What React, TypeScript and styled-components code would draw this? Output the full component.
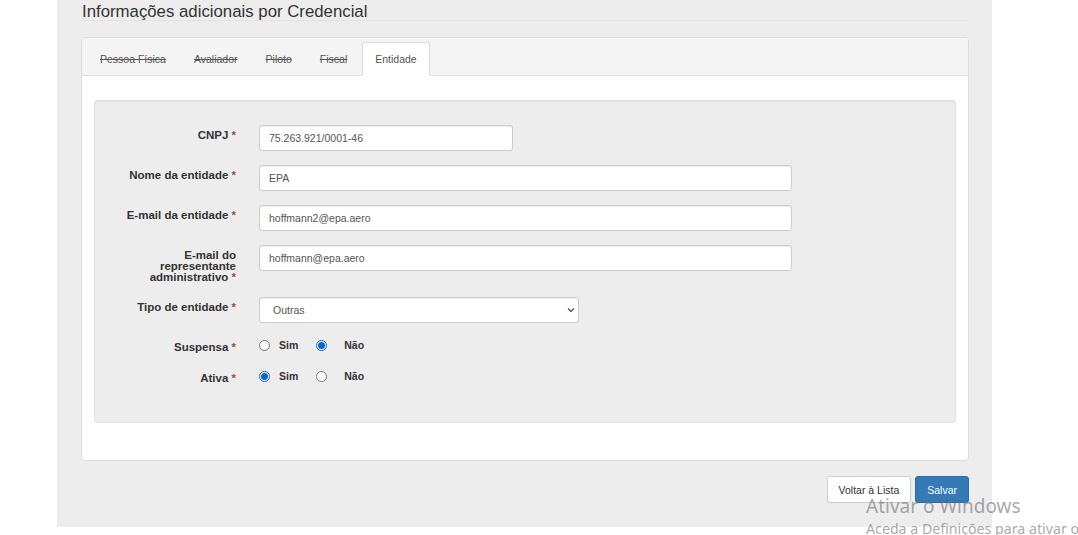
import React from "react";
import styled, { createGlobalStyle } from "styled-components";

const Global = createGlobalStyle`
  html, body { margin: 0; padding: 0; background: #fff; }
  body { font-family: "Liberation Sans", Arial, sans-serif; color: #333; }
  * { box-sizing: border-box; }
`;

const Page = styled.div`
  position: relative;
  width: 1078px;
  height: 535px;
  overflow: hidden;
`;

const Container = styled.div`
  margin-left: 57px;
  width: 935px;
  height: 527px;
  background: #ededed;
  padding: 0 23px 0 24px;
  display: flex;
  flex-direction: column;
`;

const Title = styled.h3`
  margin: 0;
  font-size: 16.8px;
  font-weight: normal;
  line-height: 17px;
  height: 21px;
  padding: 3px 0 0 1px;
  color: #333;
  border-bottom: 1px solid #e2e2e2;
`;

const Panel = styled.div`
  margin-top: 16px;
  height: 424px;
  background: #fff;
  border: 1px solid #dcdcdc;
  border-radius: 4px;
  display: flex;
  flex-direction: column;
`;

const TabBar = styled.div`
  height: 38px;
  background: #f4f4f4;
  border-bottom: 1px solid #dddddd;
  border-radius: 3px 3px 0 0;
  padding: 4px 0 0 5px;
  display: flex;
  align-items: stretch;
`;

const Tab = styled.div<{ $active?: boolean }>`
  padding: 0 12px;
  margin-right: 2px;
  margin-bottom: -1px;
  height: 34px;
  display: flex;
  align-items: center;
  font-size: 10.5px;
  color: #555;
  text-decoration: ${(p) => (p.$active ? "none" : "line-through")};
  background: ${(p) => (p.$active ? "#fff" : "transparent")};
  border: 1px solid ${(p) => (p.$active ? "#dddddd" : "transparent")};
  border-bottom-color: ${(p) => (p.$active ? "#fff" : "transparent")};
  border-radius: 3px 3px 0 0;
`;

const TabContent = styled.div`
  padding: 24px 12px 0 12px;
`;

const Well = styled.div`
  height: 323px;
  background: #ededed;
  border: 1px solid #e2e2e2;
  border-radius: 3px;
  box-shadow: inset 0 1px 1px rgba(0, 0, 0, 0.05);
  padding-top: 24px;
  display: flex;
  flex-direction: column;
  gap: 14px;
`;

const Row = styled.div`
  display: flex;
  align-items: flex-start;
`;

const Label = styled.label`
  width: 141px;
  flex: none;
  text-align: right;
  font-weight: bold;
  font-size: 11.5px;
  line-height: 11px;
  padding-top: 5px;
  color: #333;
`;

const Req = styled.span`
  color: #a94442;
`;

const Field = styled.div`
  margin-left: 23px;
  display: flex;
  align-items: center;
`;

const Input = styled.div<{ $w: number }>`
  width: ${(p) => p.$w}px;
  height: 26px;
  background: #fff;
  border: 1px solid #cccccc;
  border-radius: 3px;
  box-shadow: inset 0 1px 1px rgba(0, 0, 0, 0.075);
  padding-left: 9px;
  display: flex;
  align-items: center;
  font-size: 10.5px;
  color: #555;
`;

const Select = styled(Input)`
  padding-left: 13px;
  padding-right: 3px;
  justify-content: space-between;
`;

const RadioGroup = styled.div`
  display: flex;
  align-items: center;
  height: 16px;
  margin-bottom: 1px;
`;

const RadioItem = styled.div<{ $gap: number }>`
  display: flex;
  align-items: center;
  margin-right: ${(p) => p.$gap}px;
`;

const RadioCircle = styled.span<{ $on?: boolean; $space: number }>`
  width: 11px;
  height: 11px;
  border-radius: 50%;
  border: 1px solid ${(p) => (p.$on ? "#0b63d6" : "#767676")};
  background: #fff;
  display: inline-flex;
  align-items: center;
  justify-content: center;
  margin-right: ${(p) => p.$space}px;
  &::after {
    content: "";
    width: 7px;
    height: 7px;
    border-radius: 50%;
    background: ${(p) => (p.$on ? "#0b63d6" : "transparent")};
  }
`;

const RadioText = styled.span`
  font-weight: bold;
  font-size: 10.5px;
  color: #333;
`;

const Actions = styled.div`
  margin-top: 15px;
  display: flex;
  justify-content: flex-end;
  gap: 4px;
  padding-right: 0;
`;

const Button = styled.div<{ $primary?: boolean }>`
  height: 27px;
  padding: 0 11px;
  display: flex;
  align-items: center;
  font-size: 10.5px;
  border-radius: 3px;
  border: 1px solid ${(p) => (p.$primary ? "#2e6da4" : "#cccccc")};
  background: ${(p) => (p.$primary ? "#337ab7" : "#fff")};
  color: ${(p) => (p.$primary ? "#fff" : "#333")};
`;

const Watermark = styled.div`
  position: absolute;
  left: 866px;
  top: 494px;
  font-family: "Noto Sans", "Open Sans", sans-serif;
  color: rgba(110, 110, 110, 0.6);
  white-space: nowrap;
`;

const WmTitle = styled.div`
  font-size: 19px;
  line-height: 24px;
`;

const WmSub = styled.div`
  font-size: 14.2px;
  line-height: 21px;
`;

const Chevron = () => (
  <svg width="8" height="6" viewBox="0 0 8 6">
    <path d="M1 1.5 L4 4.5 L7 1.5" fill="none" stroke="#444" strokeWidth="1.1" />
  </svg>
);

const Radio = ({
  on,
  label,
  gap,
  space,
}: {
  on?: boolean;
  label: string;
  gap: number;
  space: number;
}) => (
  <RadioItem $gap={gap}>
    <RadioCircle $on={on} $space={space} />
    <RadioText>{label}</RadioText>
  </RadioItem>
);

export default function App() {
  return (
    <Page>
      <Global />
      <Container>
        <Title>Informações adicionais por Credencial</Title>
        <Panel>
          <TabBar>
            <Tab>Pessoa Física</Tab>
            <Tab>Avaliador</Tab>
            <Tab>Piloto</Tab>
            <Tab>Fiscal</Tab>
            <Tab $active>Entidade</Tab>
          </TabBar>
          <TabContent>
            <Well>
              <Row>
                <Label>
                  CNPJ <Req>*</Req>
                </Label>
                <Field>
                  <Input $w={254}>75.263.921/0001-46</Input>
                </Field>
              </Row>
              <Row>
                <Label>
                  Nome da entidade <Req>*</Req>
                </Label>
                <Field>
                  <Input $w={533}>EPA</Input>
                </Field>
              </Row>
              <Row>
                <Label>
                  E-mail da entidade <Req>*</Req>
                </Label>
                <Field>
                  <Input $w={533}>hoffmann2@epa.aero</Input>
                </Field>
              </Row>
              <Row>
                <Label>
                  E-mail do
                  <br />
                  representante
                  <br />
                  administrativo <Req>*</Req>
                </Label>
                <Field>
                  <Input $w={533}>hoffmann@epa.aero</Input>
                </Field>
              </Row>
              <Row>
                <Label>
                  Tipo de entidade <Req>*</Req>
                </Label>
                <Field>
                  <Select $w={320}>
                    <span>Outras</span>
                    <Chevron />
                  </Select>
                </Field>
              </Row>
              <Row>
                <Label>
                  Suspensa <Req>*</Req>
                </Label>
                <Field>
                  <RadioGroup>
                    <Radio label="Sim" gap={18} space={9} />
                    <Radio on label="Não" gap={0} space={17} />
                  </RadioGroup>
                </Field>
              </Row>
              <Row>
                <Label>
                  Ativa <Req>*</Req>
                </Label>
                <Field>
                  <RadioGroup>
                    <Radio on label="Sim" gap={18} space={9} />
                    <Radio label="Não" gap={0} space={17} />
                  </RadioGroup>
                </Field>
              </Row>
            </Well>
          </TabContent>
        </Panel>
        <Actions>
          <Button>Voltar à Lista</Button>
          <Button $primary>Salvar</Button>
        </Actions>
      </Container>
      <Watermark>
        <WmTitle>Ativar o Windows</WmTitle>
        <WmSub>Aceda a Definições para ativar o Windows.</WmSub>
      </Watermark>
    </Page>
  );
}
